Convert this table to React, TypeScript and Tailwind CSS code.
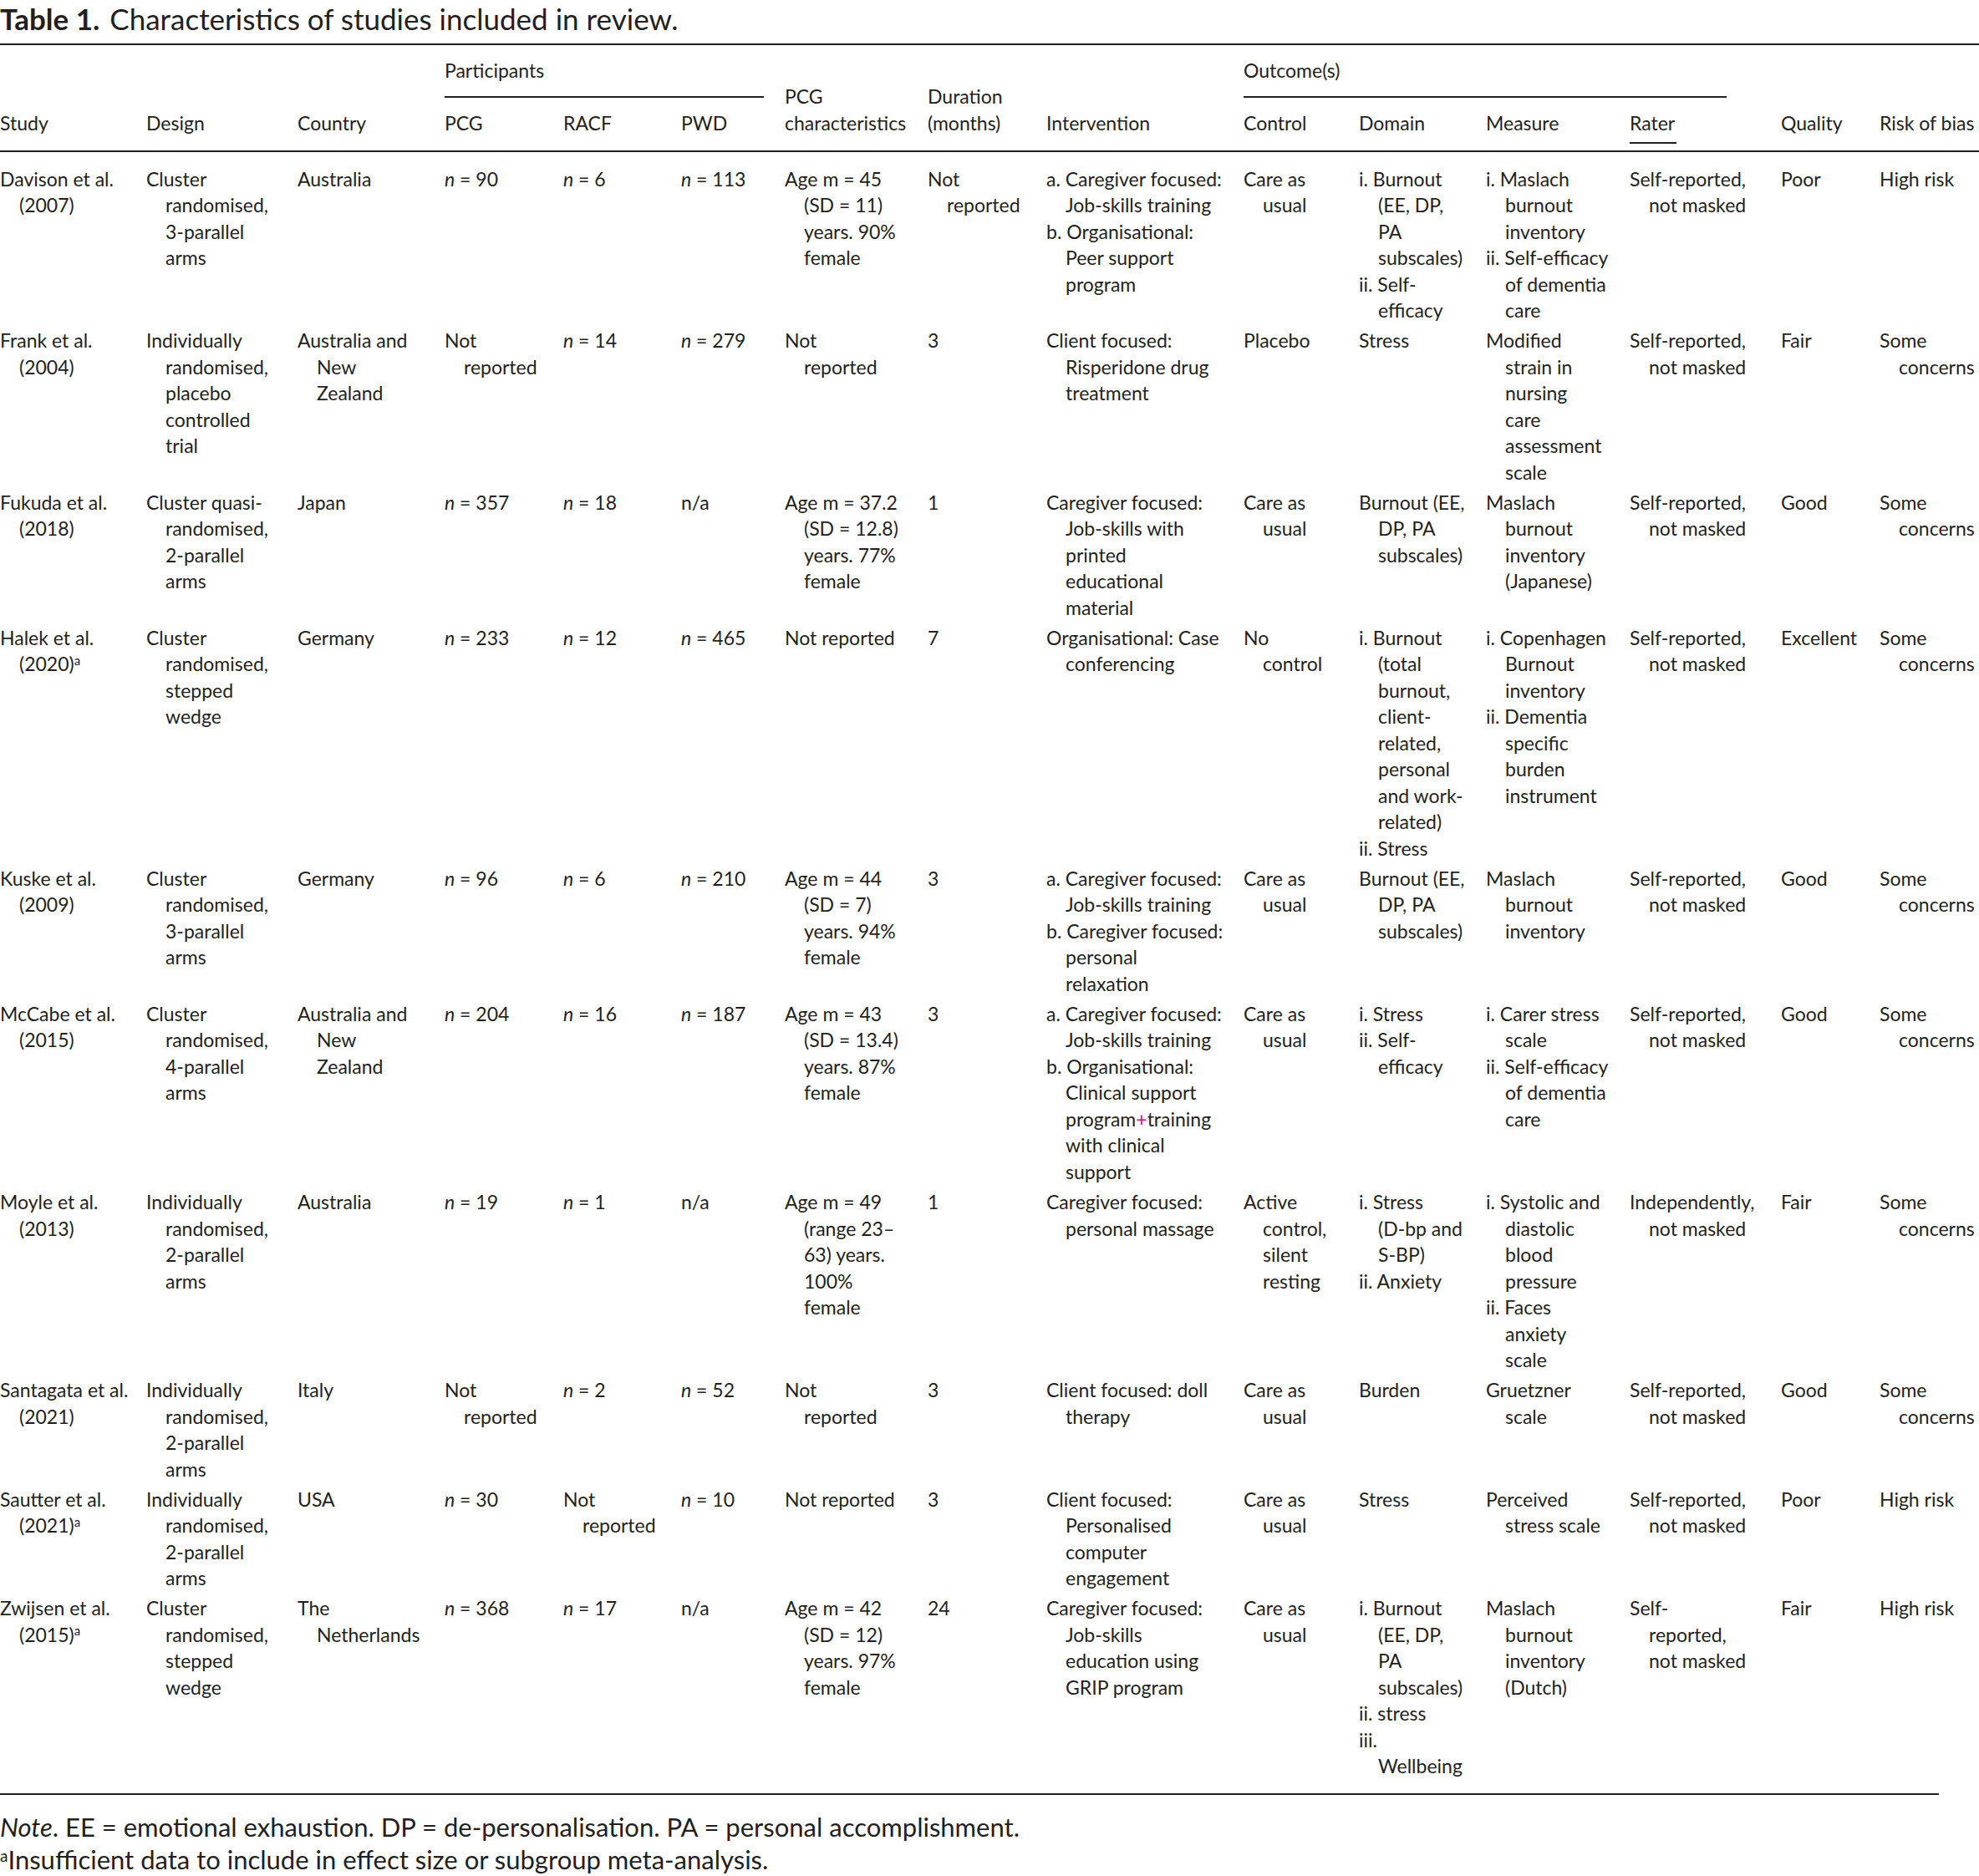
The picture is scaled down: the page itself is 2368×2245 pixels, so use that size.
import React from "react";

type Line = React.ReactNode;
type Cell = Line[][];

const N = (v: string) => (
  <>
    <i>n</i> = {v}
  </>
);

const A = (t: string) => (
  <>
    {t}
    <sup className="text-[15px]">a</sup>
  </>
);

const one = (...lines: Line[]): Cell => [lines];

const selfRep = one("Self-reported,", "not masked");
const some = one("Some", "concerns");
const careUsual = one("Care as", "usual");
const notRep = one("Not", "reported");

const rows: Cell[][] = [
  [
    one("Davison et al.", "(2007)"),
    one("Cluster", "randomised,", "3-parallel", "arms"),
    one("Australia"),
    one(N("90")),
    one(N("6")),
    one(N("113")),
    one("Age m = 45", "(SD = 11)", "years. 90%", "female"),
    notRep,
    [
      ["a. Caregiver focused:", "Job-skills training"],
      ["b. Organisational:", "Peer support", "program"],
    ],
    careUsual,
    [
      ["i. Burnout", "(EE, DP,", "PA", "subscales)"],
      ["ii. Self-", "efficacy"],
    ],
    [
      ["i. Maslach", "burnout", "inventory"],
      ["ii. Self-efficacy", "of dementia", "care"],
    ],
    selfRep,
    one("Poor"),
    one("High risk"),
  ],
  [
    one("Frank et al.", "(2004)"),
    one("Individually", "randomised,", "placebo", "controlled", "trial"),
    one("Australia and", "New", "Zealand"),
    notRep,
    one(N("14")),
    one(N("279")),
    notRep,
    one("3"),
    one("Client focused:", "Risperidone drug", "treatment"),
    one("Placebo"),
    one("Stress"),
    one("Modified", "strain in", "nursing", "care", "assessment", "scale"),
    selfRep,
    one("Fair"),
    some,
  ],
  [
    one("Fukuda et al.", "(2018)"),
    one("Cluster quasi-", "randomised,", "2-parallel", "arms"),
    one("Japan"),
    one(N("357")),
    one(N("18")),
    one("n/a"),
    one("Age m = 37.2", "(SD = 12.8)", "years. 77%", "female"),
    one("1"),
    one("Caregiver focused:", "Job-skills with", "printed", "educational", "material"),
    careUsual,
    one("Burnout (EE,", "DP, PA", "subscales)"),
    one("Maslach", "burnout", "inventory", "(Japanese)"),
    selfRep,
    one("Good"),
    some,
  ],
  [
    one("Halek et al.", A("(2020)")),
    one("Cluster", "randomised,", "stepped", "wedge"),
    one("Germany"),
    one(N("233")),
    one(N("12")),
    one(N("465")),
    one("Not reported"),
    one("7"),
    one("Organisational: Case", "conferencing"),
    one("No", "control"),
    [
      ["i. Burnout", "(total", "burnout,", "client-", "related,", "personal", "and work-", "related)"],
      ["ii. Stress"],
    ],
    [
      ["i. Copenhagen", "Burnout", "inventory"],
      ["ii. Dementia", "specific", "burden", "instrument"],
    ],
    selfRep,
    one("Excellent"),
    some,
  ],
  [
    one("Kuske et al.", "(2009)"),
    one("Cluster", "randomised,", "3-parallel", "arms"),
    one("Germany"),
    one(N("96")),
    one(N("6")),
    one(N("210")),
    one("Age m = 44", "(SD = 7)", "years. 94%", "female"),
    one("3"),
    [
      ["a. Caregiver focused:", "Job-skills training"],
      ["b. Caregiver focused:", "personal", "relaxation"],
    ],
    careUsual,
    one("Burnout (EE,", "DP, PA", "subscales)"),
    one("Maslach", "burnout", "inventory"),
    selfRep,
    one("Good"),
    some,
  ],
  [
    one("McCabe et al.", "(2015)"),
    one("Cluster", "randomised,", "4-parallel", "arms"),
    one("Australia and", "New", "Zealand"),
    one(N("204")),
    one(N("16")),
    one(N("187")),
    one("Age m = 43", "(SD = 13.4)", "years. 87%", "female"),
    one("3"),
    [
      ["a. Caregiver focused:", "Job-skills training"],
      [
        "b. Organisational:",
        "Clinical support",
        <>
          program<span className="text-[#e4007c]">+</span>training
        </>,
        "with clinical",
        "support",
      ],
    ],
    careUsual,
    [["i. Stress"], ["ii. Self-", "efficacy"]],
    [
      ["i. Carer stress", "scale"],
      ["ii. Self-efficacy", "of dementia", "care"],
    ],
    selfRep,
    one("Good"),
    some,
  ],
  [
    one("Moyle et al.", "(2013)"),
    one("Individually", "randomised,", "2-parallel", "arms"),
    one("Australia"),
    one(N("19")),
    one(N("1")),
    one("n/a"),
    one("Age m = 49", "(range 23–", "63) years.", "100%", "female"),
    one("1"),
    one("Caregiver focused:", "personal massage"),
    one("Active", "control,", "silent", "resting"),
    [["i. Stress", "(D-bp and", "S-BP)"], ["ii. Anxiety"]],
    [
      ["i. Systolic and", "diastolic", "blood", "pressure"],
      ["ii. Faces", "anxiety", "scale"],
    ],
    one("Independently,", "not masked"),
    one("Fair"),
    some,
  ],
  [
    one("Santagata et al.", "(2021)"),
    one("Individually", "randomised,", "2-parallel", "arms"),
    one("Italy"),
    notRep,
    one(N("2")),
    one(N("52")),
    notRep,
    one("3"),
    one("Client focused: doll", "therapy"),
    careUsual,
    one("Burden"),
    one("Gruetzner", "scale"),
    selfRep,
    one("Good"),
    some,
  ],
  [
    one("Sautter et al.", A("(2021)")),
    one("Individually", "randomised,", "2-parallel", "arms"),
    one("USA"),
    one(N("30")),
    notRep,
    one(N("10")),
    one("Not reported"),
    one("3"),
    one("Client focused:", "Personalised", "computer", "engagement"),
    careUsual,
    one("Stress"),
    one("Perceived", "stress scale"),
    selfRep,
    one("Poor"),
    one("High risk"),
  ],
  [
    one("Zwijsen et al.", A("(2015)")),
    one("Cluster", "randomised,", "stepped", "wedge"),
    one("The", "Netherlands"),
    one(N("368")),
    one(N("17")),
    one("n/a"),
    one("Age m = 42", "(SD = 12)", "years. 97%", "female"),
    one("24"),
    one("Caregiver focused:", "Job-skills", "education using", "GRIP program"),
    careUsual,
    [["i. Burnout", "(EE, DP,", "PA", "subscales)"], ["ii. stress"], ["iii.", "Wellbeing"]],
    one("Maslach", "burnout", "inventory", "(Dutch)"),
    one("Self-", "reported,", "not masked"),
    one("Fair"),
    one("High risk"),
  ],
];

const cols =
  "grid grid-cols-[175px_181px_176px_142px_141px_124px_171px_142px_236px_138px_152px_172px_181px_118px_160px]";

function CellView({ items }: { items: Cell }) {
  return (
    <div>
      {items.map((item, i) => (
        <div key={i}>
          {item.map((line, j) => (
            <div key={j} className={j > 0 ? "whitespace-nowrap pl-[23px]" : "whitespace-nowrap"}>
              {line}
            </div>
          ))}
        </div>
      ))}
    </div>
  );
}

const Rule = ({ className = "" }: { className?: string }) => (
  <div className={`h-[2px] bg-[#231f20] ${className}`} />
);

export default function App() {
  return (
    <div className="w-[2368px] overflow-hidden bg-white font-['Lato','Noto_Sans',sans-serif] text-[#231f20]">
      <div className="pt-[4px] text-[35px] leading-[36px] whitespace-nowrap">
        <span className="font-bold">Table 1.</span>
        <span className="ml-[12px]">Characteristics of studies included in review.</span>
      </div>

      <Rule className="mt-[12px] w-full" />

      <div className={`${cols} grid-rows-[31.5px_31.5px_31.5px] pt-[14.5px] pb-[17px] text-[23px] leading-[31.5px]`}>
        <div className="col-start-1 row-start-3">Study</div>
        <div className="col-start-2 row-start-3">Design</div>
        <div className="col-start-3 row-start-3">Country</div>
        <div className="col-start-4 col-span-3 row-start-1">Participants</div>
        <Rule className="col-start-4 col-span-3 row-start-2 self-center w-[382px]" />
        <div className="col-start-4 row-start-3">PCG</div>
        <div className="col-start-5 row-start-3">RACF</div>
        <div className="col-start-6 row-start-3">PWD</div>
        <div className="col-start-7 row-start-2 row-span-2">
          <div>PCG</div>
          <div>characteristics</div>
        </div>
        <div className="col-start-8 row-start-2 row-span-2">
          <div>Duration</div>
          <div>(months)</div>
        </div>
        <div className="col-start-9 row-start-3">Intervention</div>
        <div className="col-start-10 col-span-4 row-start-1">Outcome(s)</div>
        <Rule className="col-start-10 col-span-4 row-start-2 self-center w-[578px]" />
        <div className="col-start-10 row-start-3">Control</div>
        <div className="col-start-11 row-start-3">Domain</div>
        <div className="col-start-12 row-start-3">Measure</div>
        <div className="col-start-13 row-start-3">
          <div>Rater</div>
          <Rule className="mt-[7px] -mb-[9px] w-[56px]" />
        </div>
        <div className="col-start-14 row-start-3">Quality</div>
        <div className="col-start-15 row-start-3 whitespace-nowrap">Risk of bias</div>
      </div>

      <Rule className="w-full" />

      <div className="pt-[16.5px] text-[23px] leading-[31.5px]">
        {rows.map((row, r) => (
          <div key={r} className={`${cols} pb-[4.6px]`}>
            {row.map((cell, c) => (
              <CellView key={c} items={cell} />
            ))}
          </div>
        ))}
      </div>

      <Rule className="mt-[12px] w-[2320px]" />

      <div className="mt-[19px] pb-[2px] text-[31px] leading-[39px] whitespace-nowrap">
        <div>
          <i>Note</i>. EE = emotional exhaustion. DP = de-personalisation. PA = personal accomplishment.
        </div>
        <div>
          <sup className="text-[19px]">a</sup>Insufficient data to include in effect size or subgroup meta-analysis.
        </div>
      </div>
    </div>
  );
}
